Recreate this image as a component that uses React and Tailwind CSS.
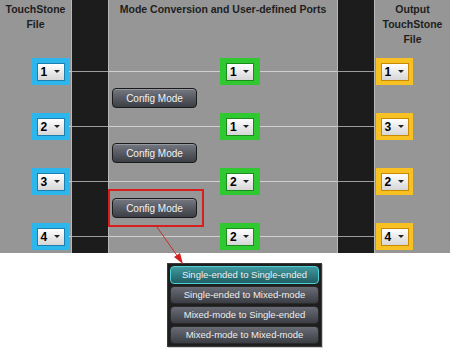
import React from 'react';

const font = { fontFamily: '"Liberation Sans", Arial, sans-serif' };

const rows = [
  { left: '1', mid: '1', right: '1' },
  { left: '2', mid: '1', right: '3' },
  { left: '3', mid: '2', right: '2' },
  { left: '4', mid: '2', right: '4' },
];

const menuItems = [
  'Single-ended to Single-ended',
  'Single-ended to Mixed-mode',
  'Mixed-mode to Single-ended',
  'Mixed-mode to Mixed-mode',
];

const Select = ({ value, frame, edge, width }) => (
  <div className={`flex h-[27px] shrink-0 items-center justify-center ${width} ${frame}`}>
    <div className={`flex h-[18px] w-[28px] items-center justify-between border bg-gradient-to-b from-[#ffffff] to-[#d6d6d6] pl-[3px] pr-[4px] ${edge}`}>
      <span className="text-[12px] font-bold leading-none text-black">{value}</span>
      <span className="h-0 w-0 border-x-[3px] border-t-[3px] border-x-transparent border-t-[#222]" />
    </div>
  </div>
);

const Line = ({ className = '' }) => <div className={`h-px ${className}`} />;

const Dark = ({ children, className = '' }) => (
  <div className={`flex w-[38px] shrink-0 items-center border-x border-[#b8b8b8] bg-[#1c1c1c] ${className}`}>
    {children}
  </div>
);

const ConfigButton = () => (
  <button className="flex h-[20px] w-[85px] items-center justify-center rounded-[4px] border border-[#1a1a1a] bg-gradient-to-b from-[#757881] to-[#3d3f46] text-[10px] text-[#f2f2f2] shadow-[inset_0_1px_0_rgba(255,255,255,0.25)]">
    Config Mode
  </button>
);

const PortRow = ({ row }) => (
  <div className="flex h-[27px]">
    <div className="flex w-[71px] shrink-0 items-center pl-[32px]">
      <Select value={row.left} width="w-[37px]" frame="bg-[#2cb6ec]" edge="border-[#1c7fb0]" />
      <Line className="flex-1 bg-[#d0d0d0]" />
    </div>
    <Dark>
      <Line className="w-full bg-[#9c9c9c]" />
    </Dark>
    <div className="flex w-[228px] shrink-0 items-center">
      <Line className="w-[111px] bg-[#d0d0d0]" />
      <Select value={row.mid} width="w-[40px]" frame="bg-[#30c830]" edge="border-[#1d8a1d]" />
      <Line className="flex-1 bg-[#d0d0d0]" />
    </div>
    <Dark>
      <Line className="w-full bg-[#9c9c9c]" />
    </Dark>
    <div className="flex w-[75px] shrink-0 items-center pl-px">
      <Select value={row.right} width="w-[37px]" frame="bg-[#f7c124]" edge="border-[#c98a00]" />
    </div>
  </div>
);

const GapRow = ({ highlighted }) => (
  <div className="flex h-[28px]">
    <div className="w-[71px] shrink-0" />
    <Dark />
    <div className="flex w-[228px] shrink-0 items-start pl-[3px] pt-[3px]">
      <div className="relative">
        <ConfigButton />
        {highlighted && (
          <div className="absolute -bottom-[9px] -left-[4px] -right-[7px] -top-[9px] border-2 border-[#d71f1f]" />
        )}
      </div>
    </div>
    <Dark />
    <div className="w-[75px] shrink-0" />
  </div>
);

export default function App() {
  return (
    <div className="relative h-[353px] w-[450px] overflow-hidden bg-white" style={font}>
      <div className="flex h-[253px] flex-col bg-[#969696]">
        <div className="flex h-[58px] text-[10.5px] font-bold leading-[15px] text-[#1e1e1e]">
          <div className="w-[71px] shrink-0 pt-[2px] text-center">
            TouchStone
            <br />
            File
          </div>
          <Dark className="self-stretch" />
          <div className="w-[228px] shrink-0 pt-[2px] text-center">Mode Conversion and User-defined Ports</div>
          <Dark className="self-stretch" />
          <div className="w-[75px] shrink-0 pt-[2px] text-center">
            Output
            <br />
            TouchStone
            <br />
            File
          </div>
        </div>
        {rows.map((row, i) => (
          <React.Fragment key={i}>
            <PortRow row={row} />
            {i < 3 && <GapRow highlighted={i === 2} />}
          </React.Fragment>
        ))}
        <div className="flex flex-1">
          <div className="w-[71px] shrink-0" />
          <Dark className="self-stretch" />
          <div className="w-[228px] shrink-0" />
          <Dark className="self-stretch" />
        </div>
      </div>

      <div className="ml-[167px] mt-[10px] flex w-[155px] flex-col gap-[2px] border border-[#3a3a3a] bg-[#1e1e1e] p-[2px] shadow-[1px_1px_0_#cfcfcf]">
        {menuItems.map((item, i) => (
          <div
            key={item}
            className={`flex h-[18px] items-center justify-center rounded-[4px] border text-[9.5px] text-[#eeeeee] ${
              i === 0
                ? 'border-[#4fd0d6] bg-gradient-to-b from-[#3f9aa0] to-[#1f5f64]'
                : 'border-[#2a2a2a] bg-gradient-to-b from-[#6a6d76] to-[#3c3e45]'
            }`}
          >
            {item}
          </div>
        ))}
      </div>

      <svg className="absolute left-0 top-0" width="450" height="353" viewBox="0 0 450 353">
        <line x1="157" y1="227" x2="178" y2="257" stroke="#c4302b" strokeWidth="1" />
        <polygon points="183,264 174,257 180,253" fill="#d42020" />
      </svg>
    </div>
  );
}
